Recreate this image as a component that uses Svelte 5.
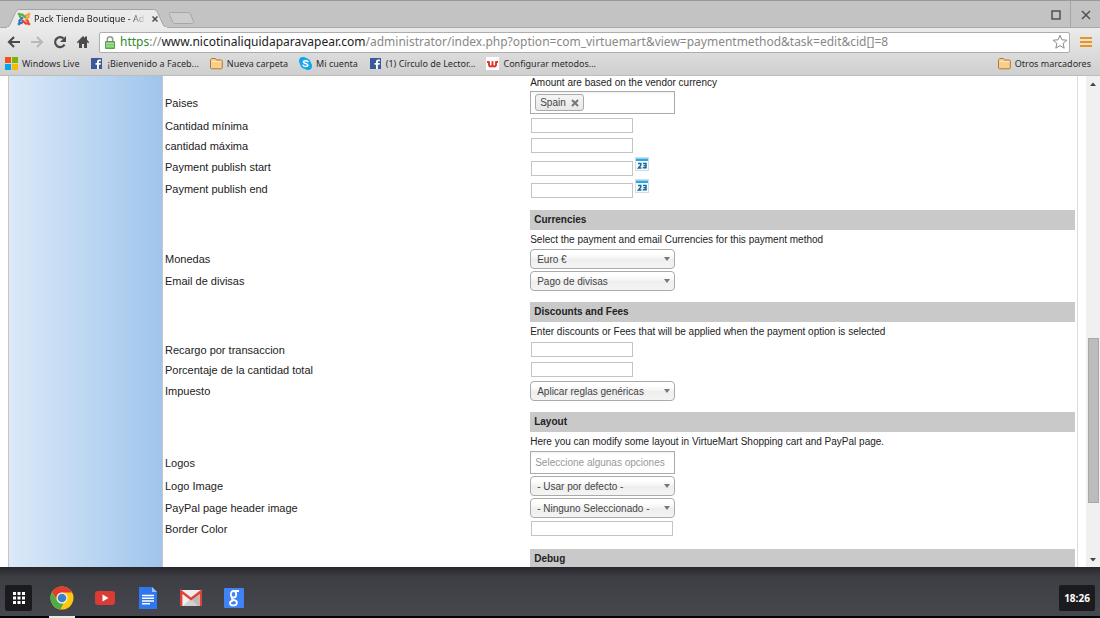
<script lang="ts">
  type Row = { id: string; label: string; kind: string; value?: string };
  type Section = { title?: string; note: string; rows: Row[] };

  const sections: Section[] = [
    {
      note: 'Amount are based on the vendor currency',
      rows: [
        { id: 'countries', label: 'Paises', kind: 'chips', value: 'Spain' },
        { id: 'min', label: 'Cantidad mínima', kind: 'text' },
        { id: 'max', label: 'cantidad máxima', kind: 'text' },
        { id: 'start', label: 'Payment publish start', kind: 'date' },
        { id: 'end', label: 'Payment publish end', kind: 'date' }
      ]
    },
    {
      title: 'Currencies',
      note: 'Select the payment and email Currencies for this payment method',
      rows: [
        { id: 'currency', label: 'Monedas', kind: 'select', value: 'Euro €' },
        { id: 'mailcurrency', label: 'Email de divisas', kind: 'select', value: 'Pago de divisas' }
      ]
    },
    {
      title: 'Discounts and Fees',
      note: 'Enter discounts or Fees that will be applied when the payment option is selected',
      rows: [
        { id: 'fee', label: 'Recargo por transaccion', kind: 'text' },
        { id: 'percent', label: 'Porcentaje de la cantidad total', kind: 'text' },
        { id: 'tax', label: 'Impuesto', kind: 'select', value: 'Aplicar reglas genéricas' }
      ]
    },
    {
      title: 'Layout',
      note: 'Here you can modify some layout in VirtueMart Shopping cart and PayPal page.',
      rows: [
        { id: 'logos', label: 'Logos', kind: 'multi', value: 'Seleccione algunas opciones' },
        { id: 'logoimage', label: 'Logo Image', kind: 'select', value: '- Usar por defecto -' },
        { id: 'header', label: 'PayPal page header image', kind: 'select', value: '- Ninguno Seleccionado -' },
        { id: 'border', label: 'Border Color', kind: 'wide' }
      ]
    },
    { title: 'Debug', note: '', rows: [] }
  ];

  const bookmarks = [
    { icon: 'windows', text: 'Windows Live' },
    { icon: 'facebook', text: '¡Bienvenido a Faceb...' },
    { icon: 'folder', text: 'Nueva carpeta' },
    { icon: 'skype', text: 'Mi cuenta' },
    { icon: 'facebook', text: '(1) Círculo de Lector...' },
    { icon: 'w', text: 'Configurar metodos...' }
  ];
</script>

{#snippet siteIcon(name: string)}
  <svg class="site" viewBox="0 0 13 13" aria-hidden="true">
    {#if name === 'windows'}
      <path fill="#f1511b" d="M0 0h6v6H0z" /><path fill="#7ab800" d="M7 0h6v6H7z" />
      <path fill="#00a6ee" d="M0 7h6v6H0z" /><path fill="#fbb800" d="M7 7h6v6H7z" />
    {:else if name === 'facebook'}
      <path fill="#3b5998" d="M1 1h11v11H1z" />
      <path fill="#fff" d="M7 12V7.8H5.5V6H7V4.8C7 3.2 8 2.4 9.3 2.4h1.6v1.8H9.8c-.7 0-.9.3-.9.9V6h2l-.3 1.8H8.9V12z" />
    {:else if name === 'folder'}
      <path fill="#f8ce88" stroke="#a97b3f" d="M.5 11V2.5l1-1h4l1 1.500h5l.8.8V11l-.8.8H1.300z" />
      <path stroke="#fde7bd" d="M1.500 4.500h10" />
    {:else if name === 'skype'}
      <circle cx="4" cy="4" r="4" fill="#12a5e8" /><circle cx="9" cy="9" r="4" fill="#12a5e8" /><circle cx="6.5" cy="6.5" r="5.4" fill="#12a5e8" />
      <path fill="none" stroke="#fff" stroke-width="1.500" stroke-linecap="round" d="M9 4.600C8.500 3.500 4.500 3 4.300 5c0 1.900 4.600 1.100 4.600 3.100 0 2-4.200 1.800-4.800.2" />
    {:else}
      <path fill="#fff" d="M0 0h13v13H0z" />
      <path fill="none" stroke="#e0392d" stroke-width="2" stroke-linejoin="round" d="M1 5h2v2.500C3 10 6.500 10 6.500 7.500V5v2.500c0 2.500 3.500 2.500 3.500 0V5h2" />
    {/if}
  </svg>
{/snippet}

<div class="desktop">
  <header>
    <div class="strip">
      <div class="tab">
        <svg class="shape" viewBox="0 0 170 20" preserveAspectRatio="none" aria-hidden="true">
          <path fill="#ebebeb" stroke="#a0a0a0" d="M0 19.500c3 0 4-1 5-3L11 3.500c1-2 2-3 4-3h138c2 0 3 1 4 3l6 13c1 2 2 3 5 3" />
          <path stroke="#ebebeb" stroke-width="2" d="M2 20h165" />
        </svg>
        <svg class="joomla" viewBox="0 0 14 14" fill="none" stroke-width="2.200" aria-hidden="true">
          <path stroke="#f9a13a" d="M8 4.500 9.500 3l2 .2.100 2-3.500 3.600" /><path stroke="#5cae45" d="M4.500 6 3 4.500l.2-1.800 2-.2L9 6" />
          <path stroke="#3578c0" d="M6 9.500 4.500 11l-2-.2-.1-2L6 5.200" /><path stroke="#e8432f" d="m9.500 8 1.500 1.500-.2 1.800-2 .2L5 8" />
          <circle cx="2" cy="2" r="1" fill="#5cae45" stroke="#5cae45" stroke-width="1" /><circle cx="12" cy="2" r="1" fill="#f9a13a" stroke="#f9a13a" stroke-width="1" />
          <circle cx="2" cy="12" r="1" fill="#3578c0" stroke="#3578c0" stroke-width="1" /><circle cx="12" cy="12" r="1" fill="#e8432f" stroke="#e8432f" stroke-width="1" />
        </svg>
        <span class="title">Pack Tienda Boutique - Ad</span>
        <button class="close" aria-label="Cerrar pestaña">
          <svg viewBox="0 0 8 8"><path d="m1.500 1.500 5 5m0-5-5 5" stroke="#505050" stroke-width="1.500" /></svg>
        </button>
      </div>
      <button class="newtab" aria-label="Nueva pestaña">
        <svg viewBox="0 0 26 12"><path fill="#cdcdcd" stroke="#a6a6a6" d="M2.500.5h18c1 0 1.500.5 2 1.500l3 7.500c.4 1.300 0 2-1 2h-18c-1 0-1.600-.5-2-1.500l-3-7.500c-.4-1.300 0-2 1-2z" /></svg>
      </button>
      <div class="window">
        <button aria-label="Maximizar"><svg viewBox="0 0 10 10"><path fill="none" stroke="#505050" stroke-width="1.500" d="M1 1h8v8H1z" /></svg></button>
        <button aria-label="Cerrar"><svg viewBox="0 0 10 10"><path stroke="#505050" stroke-width="1.500" d="m1 1 8 8m0-8-8 8" /></svg></button>
      </div>
    </div>

    <nav class="toolbar">
      <button aria-label="Atrás"><svg viewBox="0 0 14 14"><path fill="none" stroke="#4b4b4b" stroke-width="2.200" d="M13 7H2.500M7 2 2 7l5 5" /></svg></button>
      <button aria-label="Adelante"><svg viewBox="0 0 14 14"><path fill="none" stroke="#b8b8b8" stroke-width="2" d="M1 7h10.500M7 2l5 5-5 5" /></svg></button>
      <button aria-label="Recargar"><svg viewBox="0 0 14 14"><path fill="none" stroke="#4b4b4b" stroke-width="2.200" d="M11.500 9.500A5 5 0 1 1 10.600 3.500" /><path fill="#4b4b4b" d="M13 1v6H7z" /></svg></button>
      <button aria-label="Inicio"><svg viewBox="0 0 14 14"><path fill="#4b4b4b" d="M7 1 .8 7.200l1 1L3 7.300V13h3V9h2v4h3V7.300l1.200.9 1-1L11 4.800V1.500H9V3z" /></svg></button>
      <div class="omnibox">
        <svg class="lock" viewBox="0 0 10 13" aria-hidden="true"><path fill="none" stroke="#9a9a9a" stroke-width="1.600" d="M2.300 6V3.500a2.700 2.700 0 0 1 5.400 0V6" /><path fill="#7ac36a" stroke="#55a446" d="M.5 5.500h9v7h-9z" /><path stroke="#b5e2a8" d="M1 7.500h8M1 10h8" /></svg>
        <span class="url"><i class="secure">https</i>://<b>www.nicotinaliquidaparavapear.com</b>/administrator/index.php?option=com_virtuemart&amp;view=paymentmethod&amp;task=edit&amp;cid[]=8</span>
        <button class="star" aria-label="Añadir a marcadores"><svg viewBox="0 0 16 16"><path fill="#fff" stroke="#8a8a8a" stroke-linejoin="round" d="m8 1.300 1.900 4.500 4.900.4-3.700 3.200 1.100 4.800L8 11.700l-4.200 2.500 1.100-4.800L1.200 6.200l4.900-.4z" /></svg></button>
      </div>
      <button class="menu" aria-label="Menú"><svg viewBox="0 0 12 12"><path stroke="#ec951c" stroke-width="2" d="M0 2h12M0 6h12M0 10h12" /></svg></button>
    </nav>

    <nav class="bookmarks">
      {#each bookmarks as b}
        <a href="#top">{@render siteIcon(b.icon)}{b.text}</a>
      {/each}
      <a class="other" href="#top">{@render siteIcon('folder')}Otros marcadores</a>
    </nav>
  </header>

  <div class="viewport">
    <aside></aside>
    <main>
      {#each sections as s}
        <section>
          {#if s.title}<h2>{s.title}</h2>{/if}
          {#if s.note}<p class:first={!s.title}>{s.note}</p>{/if}
          {#each s.rows as r}
            <div class="row {r.kind}">
              <label for={r.id}>{r.label}</label>
              <div class="field">
                {#if r.kind === 'select'}
                  <span class="drop"><select id={r.id}><option>{r.value}</option></select></span>
                {:else if r.kind === 'chips'}
                  <div class="box">
                    <span class="chip">{r.value}<button aria-label="Quitar Spain"><svg viewBox="0 0 8 8"><path d="m1 1 6 6m0-6L1 7" stroke="#777" stroke-width="2" /></svg></button></span>
                    <input id={r.id} type="text" />
                  </div>
                {:else if r.kind === 'multi'}
                  <div class="box"><input id={r.id} type="text" placeholder={r.value} /></div>
                {:else}
                  <input class="plain" id={r.id} type="text" />
                  {#if r.kind === 'date'}
                    <button class="calendar" aria-label="Calendario">
                      <svg viewBox="0 0 14 14"><path fill="#d5dce1" d="M0 0h14v14H0z" /><path fill="#f8fafb" d="M1 4h12v9H1z" /><path fill="#29a9e1" d="M1 1h12v3H1z" /><path stroke="#8bd3f2" d="M1 1.500h12" /><path fill="none" stroke="#176a9f" stroke-width="1.500" d="M3 6.500h2.800v1.800L3.500 11h3M8 6.500h3v4.300H7.800M8.500 8.700H11" /></svg>
                    </button>
                  {/if}
                {/if}
              </div>
            </div>
          {/each}
        </section>
      {/each}
    </main>
    <div class="scroll" aria-hidden="true">
      <svg viewBox="0 0 6 4"><path fill="#444" d="m0 4 3-3.500L6 4z" /></svg>
      <div class="track"><div class="thumb"></div></div>
      <svg viewBox="0 0 6 4"><path fill="#444" d="m0 0 3 3.500L6 0z" /></svg>
    </div>
  </div>

  <footer>
    <button class="launcher" aria-label="Aplicaciones"><svg viewBox="0 0 12 12"><path fill="#fff" d="M0 0h3v3H0zM4.500 0h3v3h-3zM9 0h3v3H9zM0 4.500h3v3H0zM4.500 4.500h3v3h-3zM9 4.500h3v3H9zM0 9h3v3H0zM4.500 9h3v3h-3zM9 9h3v3H9z" /></svg></button>
    <button class="app active" aria-label="Chrome">
      <svg viewBox="0 0 24 24"><circle cx="12" cy="12" r="11.500" fill="#fdc80f" /><path fill="#e33b2e" d="M2 6.300A11.500 11.500 0 0 1 22 6.500H12A5.500 5.500 0 0 0 6.800 13.800z" /><path fill="#4aae48" d="M2 6.300 7.200 14.800A5.500 5.500 0 0 0 13.300 17.400L10.500 23.400A11.500 11.500 0 0 1 2 6.300z" /><circle cx="12" cy="12" r="5.500" fill="#f2f2f2" /><circle cx="12" cy="12" r="4.300" fill="#3b82c4" /></svg>
    </button>
    <button class="app" aria-label="YouTube"><svg viewBox="0 0 24 24"><rect x="2" y="5" width="20" height="14" rx="3" fill="#dc3b33" /><path fill="#fff" d="m9.500 8.500 6 3.500-6 3.500z" /></svg></button>
    <button class="app" aria-label="Documentos"><svg viewBox="0 0 24 24"><path fill="#2f77ef" d="M3 1h13l5 5v17H3z" /><path fill="#9cc2fa" d="m16 1 5 5h-5z" /><path stroke="#fff" stroke-width="1.500" d="M6 9.500h12M6 12.200h12M6 15h12M6 17.800h8" /></svg></button>
    <button class="app" aria-label="Gmail"><svg viewBox="0 0 24 24"><path fill="#f0eeee" d="M1 4h22v16H1z" /><path fill="#d3d0d0" d="m4 20 8-8 8 8z" /><path fill="#bdbaba" d="m12 13 8-6v13h-1z" /><path fill="none" stroke="#dc4437" stroke-width="2.400" d="M2.200 20V5.500L12 13l9.800-7.500V20" /></svg></button>
    <button class="app" aria-label="Google"><svg viewBox="0 0 24 24"><rect x="2" y="2" width="20" height="20" rx="1" fill="#3f83f4" /><g fill="none" stroke="#fff" stroke-width="1.800"><ellipse cx="11.500" cy="8.300" rx="2.700" ry="3.300" /><path d="M12 5h5M10.500 11.800c-1.800 1.300.8 1.900 2.500 2.600 3.200 1.400 2 5-1.500 5-4.200 0-5-4-.5-4.800" /></g></svg></button>
    <time>18:26</time>
  </footer>
</div>

<style>
  :global(body) { background: #000; }
  .desktop { height: 100vh; display: flex; flex-direction: column; overflow: hidden; font: 10px/14px "Liberation Sans", Arial, sans-serif; color: #222; }
  .desktop * { box-sizing: border-box; }
  button { display: flex; align-items: center; justify-content: center; padding: 0; border: 0; background: none; }
  svg { display: block; flex: none; }

  header { flex: none; font-family: "Noto Sans", "Open Sans", sans-serif; color: #333; background: linear-gradient(#ebebeb 28px, #cfcfcf); border-bottom: 1px solid #bdbdbd; }
  .strip { height: 28px; display: flex; align-items: flex-end; padding-left: 5px; background: #c3c3c3; border-top: 1px solid #999; box-shadow: inset 0 -1px #a8a8a8; }
  .tab { position: relative; width: 165px; height: 19px; display: flex; align-items: center; padding: 0 9px 0 12px; gap: 3px; }
  .shape { position: absolute; left: 0; top: 0; width: 100%; height: 100%; }
  .joomla { position: relative; width: 14px; height: 14px; }
  .title { position: relative; flex: 1; white-space: nowrap; font-size: 9px; color: #222; -webkit-mask-image: linear-gradient(90deg, #000 85%, transparent); mask-image: linear-gradient(90deg, #000 85%, transparent); }
  .close { position: relative; width: 12px; height: 12px; }
  .close svg { width: 8px; height: 8px; }
  .newtab { height: 19px; padding-bottom: 1px; margin-left: -2px; }
  .newtab svg { width: 26px; height: 12px; }
  .window { margin-left: auto; display: flex; align-self: stretch; }
  .window button { width: 29px; border-right: 1px solid #a6a6a6; }
  .window button:last-child { border: 0; }
  .window svg { width: 10px; height: 10px; }

  .toolbar { height: 28px; display: flex; align-items: center; gap: 9px; padding: 0 7px; }
  .toolbar > button { width: 14px; height: 20px; }
  .toolbar > button svg { width: 14px; height: 14px; }
  .omnibox { flex: 1; min-width: 0; height: 21px; display: flex; align-items: center; gap: 5px; padding: 0 1px 0 5px; background: #fff; border: 1px solid #adadad; border-radius: 2px; }
  .lock { width: 10px; height: 13px; }
  .url { flex: 1; min-width: 0; overflow: hidden; white-space: nowrap; font-size: 12px; line-height: 18px; color: #888; }
  .url b { font-weight: 400; color: #222; }
  .url i { font-style: normal; color: #32892f; }
  .star svg { width: 16px; height: 16px; }
  .toolbar .menu svg { width: 12px; height: 12px; }

  .bookmarks { height: 19px; display: flex; align-items: center; gap: 11px; padding: 0 9px 4px 5px; }
  .bookmarks a { display: flex; align-items: center; gap: 4px; color: #2b2b2b; text-decoration: none; white-space: nowrap; font-size: 9px; }
  .bookmarks .other { margin-left: auto; }
  .site { width: 13px; height: 13px; }

  .viewport { flex: 1; min-height: 0; display: flex; padding-left: 8px; background: #fff; overflow: hidden; }
  aside { flex: none; width: 155px; background: linear-gradient(90deg, #dbe9f8, #9fc5ec); border: solid #c6c6c6; border-width: 0 1px; }
  main { flex: 1; min-width: 0; padding: 0 2px; border-right: 1px solid #ddd; margin-right: 8px; }
  section { display: grid; grid-template-columns: 2fr 3fr; column-gap: 2px; margin-bottom: 10px; }
  h2 { grid-column: 2; margin: 0; height: 20px; padding: 0 4px; font-size: 10px; line-height: 20px; background: #c9c9c9; }
  p { grid-column: 2; margin: 0; height: 18px; line-height: 20px; white-space: nowrap; }
  .first { height: 14px; line-height: 14px; }
  .row { grid-column: 1 / -1; display: grid; grid-template-columns: subgrid; align-items: center; height: 20px; }
  .row.select, .row.date { height: 22px; }
  .row.chips { height: 26px; }
  .row.multi { height: 25px; }
  label { font-size: 11px; }
  .field { align-self: stretch; display: flex; align-items: flex-start; gap: 2px; padding-top: 1px; }
  input { font: inherit; color: #444; background: #fff; }
  .plain { width: 102px; height: 15px; margin: 1px 0 0 1px; padding: 0 2px; border: 1px solid #c4c4c4; }
  .date .plain { margin-top: 4px; }
  .wide .plain { width: 142px; }
  .calendar svg { width: 14px; height: 14px; }
  .box { width: 145px; height: 23px; display: flex; align-items: center; padding: 0 4px; border: 1px solid #aaa; background: linear-gradient(#f3f3f3, #fff 3px); }
  .box input { flex: 1; min-width: 0; padding: 0; border: 0; background: none; }
  .box input::placeholder { color: #999; opacity: 1; }
  .chip { display: flex; align-items: center; gap: 5px; height: 17px; padding: 0 4px; border: 1px solid #aaa; border-radius: 3px; background: linear-gradient(#f5f5f5, #e8e8e8); color: #444; }
  .chip svg { width: 8px; height: 8px; }
  .drop { position: relative; width: 145px; height: 20px; }
  .drop::after { content: ""; position: absolute; right: 5px; top: 8px; border: solid transparent; border-width: 4px 3px 0; border-top-color: #777; pointer-events: none; }
  select { appearance: none; display: block; width: 100%; height: 100%; padding: 2px 6px 0; border: 1px solid #aaa; border-radius: 4px; background: linear-gradient(#fff 20%, #f3f3f3 50%, #eee 52%, #f4f4f4); font: inherit; color: #444; }

  .scroll { flex: none; width: 14px; display: flex; flex-direction: column; align-items: center; padding: 6px 0 5px; background: #f0f0f0; }
  .scroll svg { width: 6px; height: 4px; }
  .track { flex: 1; align-self: stretch; padding: 0 1px 0 2px; display: flex; flex-direction: column; }
  .track::before { content: ""; flex: 253; }
  .track::after { content: ""; flex: 55; }
  .thumb { flex: 163; background: #bcbcbc; border: 1px solid #a8a8a8; }

  footer { flex: none; height: 51px; display: flex; align-items: center; gap: 17px; padding: 12px 5px 0; background: linear-gradient(#27272c, #3d3d44 10px, #47474f); border-bottom: 2px solid #000; }
  .launcher { width: 27px; height: 26px; background: #1b1b1f; border-radius: 2px; }
  .launcher svg { width: 12px; height: 12px; }
  .app { position: relative; width: 26px; height: 26px; }
  .app svg { width: 24px; height: 24px; }
  .active::after { content: ""; position: absolute; left: 0; right: 0; bottom: -8px; height: 3px; background: #e8e8e8; }
  time { margin-left: auto; width: 36px; height: 26px; background: #1b1b1f; border-radius: 2px; color: #fff; font: 700 10px/26px "Open Sans", sans-serif; text-align: center; }
</style>
